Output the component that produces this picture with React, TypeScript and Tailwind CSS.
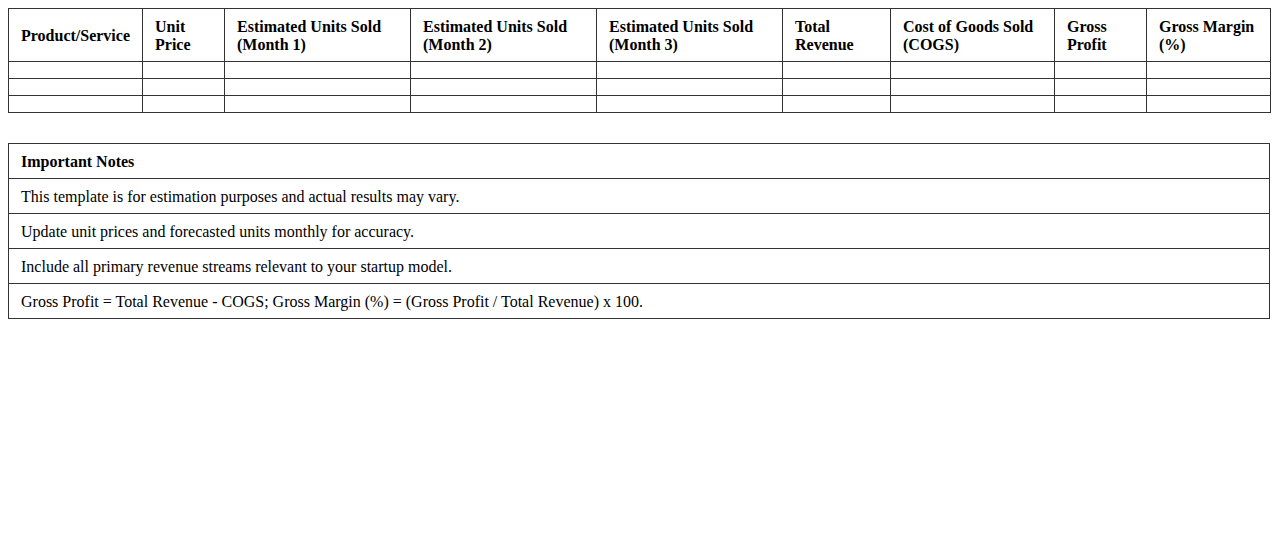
const headers = [
  { label: "Product/Service", w: "w-[134px]" },
  { label: "Unit Price", w: "w-[82px]" },
  { label: "Estimated Units Sold (Month 1)", w: "w-[186px]" },
  { label: "Estimated Units Sold (Month 2)", w: "w-[186px]" },
  { label: "Estimated Units Sold (Month 3)", w: "w-[186px]" },
  { label: "Total Revenue", w: "w-[108px]" },
  { label: "Cost of Goods Sold (COGS)", w: "w-[164px]" },
  { label: "Gross Profit", w: "w-[92px]" },
  { label: "Gross Margin (%)", w: "w-[124px]" },
];

const notes = [
  "This template is for estimation purposes and actual results may vary.",
  "Update unit prices and forecasted units monthly for accuracy.",
  "Include all primary revenue streams relevant to your startup model.",
  "Gross Profit = Total Revenue - COGS; Gross Margin (%) = (Gross Profit / Total Revenue) x 100.",
];

export default function App() {
  return (
    <div
      className="min-h-screen bg-white p-2 text-[16px] leading-[18px] text-black"
      style={{ fontFamily: '"Liberation Serif", "Times New Roman", serif' }}
    >
      <table className="w-full table-fixed border-collapse">
        <thead>
          <tr>
            {headers.map((h) => (
              <th
                key={h.label}
                className={`${h.w} border border-[#333] px-3 pt-[9px] pb-[7px] text-left align-middle font-bold`}
              >
                {h.label}
              </th>
            ))}
          </tr>
        </thead>
        <tbody>
          {[0, 1, 2].map((r) => (
            <tr key={r}>
              {headers.map((h) => (
                <td key={h.label} className="border border-[#333] px-3 py-2"></td>
              ))}
            </tr>
          ))}
        </tbody>
      </table>

      <table className="mt-[30px] w-full border-collapse">
        <thead>
          <tr>
            <th className="border border-[#333] px-3 pt-[9px] pb-[7px] text-left font-bold">Important Notes</th>
          </tr>
        </thead>
        <tbody>
          {notes.map((n) => (
            <tr key={n}>
              <td className="border border-[#333] px-3 pt-[9px] pb-[7px]">{n}</td>
            </tr>
          ))}
        </tbody>
      </table>
    </div>
  );
}
